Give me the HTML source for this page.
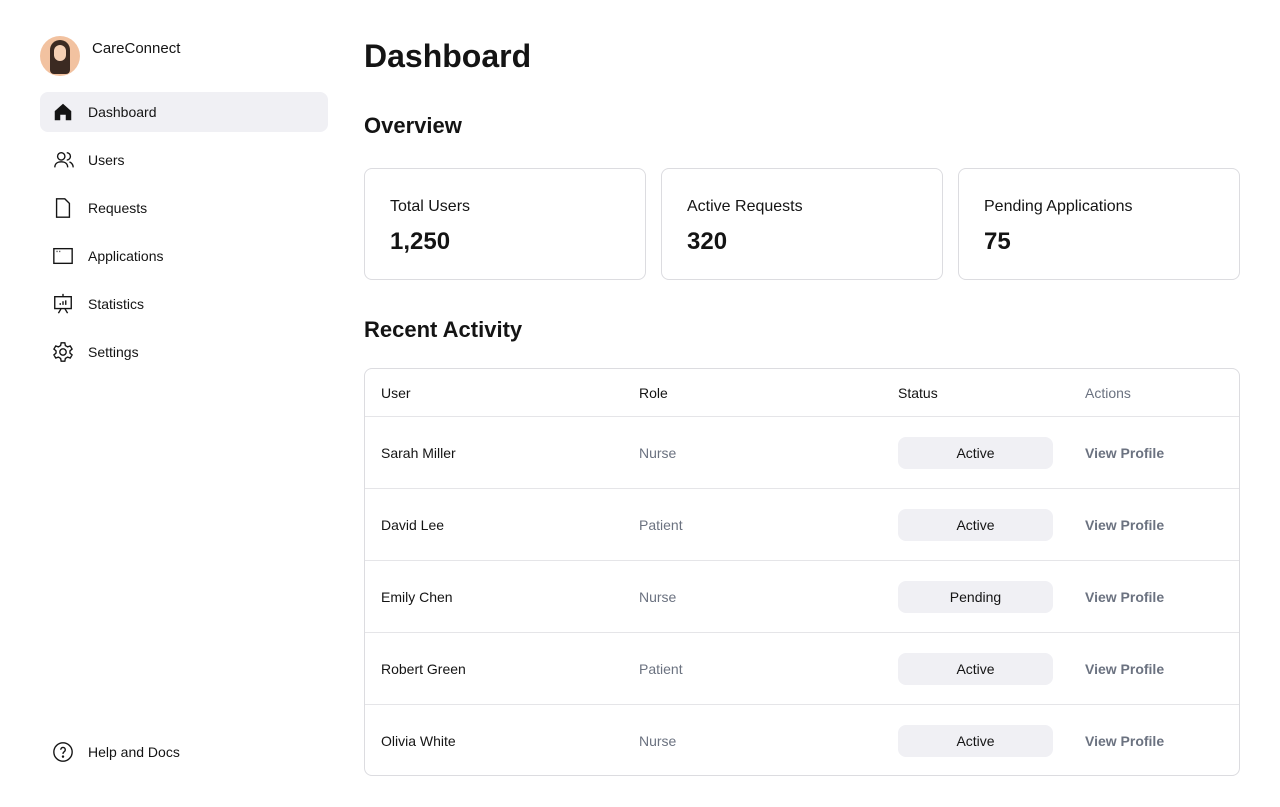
<!DOCTYPE html>
<html><head><style>
*{box-sizing:border-box;margin:0;padding:0}
body{width:1280px;height:807px;background:#fff;font-family:"Liberation Sans",sans-serif;color:#141414;position:relative;overflow:hidden}
.abs{position:absolute}
.nav{position:absolute;left:40px;width:288px;height:40px;border-radius:8px;display:flex;align-items:center;font-size:14px}
.nav svg{position:absolute;left:12px;top:9px}
.nav span{position:absolute;left:48px}
.card{position:absolute;top:168px;width:282px;height:112px;border:1px solid #dcdce0;border-radius:8px}
.card .l{position:absolute;left:25px;top:29px;font-size:16px}
.card .v{position:absolute;left:25px;top:59px;font-size:24px;font-weight:bold}
.tbl{position:absolute;left:364px;top:368px;width:876px;height:408px;border:1px solid #dcdce0;border-radius:8px}
.row{position:absolute;left:0;width:874px;font-size:14px}
.row div{position:absolute}
.bd{border-top:1px solid #e5e5e8}
.pill{background:#f0f0f4;border-radius:8px;width:155px;height:32px;text-align:center;line-height:32px}
.vp{color:#6b7280;font-weight:bold}
.gr{color:#6b7280}
</style></head><body>
<div class="abs" style="left:40px;top:36px;width:40px;height:40px;border-radius:50%;background:#f2c2a0;overflow:hidden">
<div style="position:absolute;left:10px;top:4px;width:20px;height:34px;border-radius:10px 10px 4px 4px;background:#3b2a22"></div>
<div style="position:absolute;left:14px;top:9px;width:12px;height:16px;border-radius:6px;background:#f5d0b5"></div>
</div>
<div class="abs" style="left:92px;top:40px;font-size:15px">CareConnect</div>
<div class="nav" style="top:92px;background:#f0f0f4"><svg width="22" height="22" viewBox="0 0 24 24"><path d="M3 11 12 3l9 8v10h-6v-6h-6v6H3z" fill="#141414"/></svg><span>Dashboard</span></div>
<div class="nav" style="top:140px"><svg width="24" height="22" viewBox="0 0 24 24" fill="none" stroke="#141414" stroke-width="1.5"><circle cx="9" cy="8" r="4"/><path d="M2 20c0-4 3-6 7-6s7 2 7 6"/><path d="M15 4a4 4 0 010 8M18 14c2 1 4 3 4 6"/></svg><span>Users</span></div>
<div class="nav" style="top:188px"><svg width="22" height="22" viewBox="0 0 24 24" fill="none" stroke="#141414" stroke-width="1.5"><path d="M5 2h9l5 5v15H5z"/></svg><span>Requests</span></div>
<div class="nav" style="top:236px"><svg width="22" height="22" viewBox="0 0 24 24" fill="none" stroke="#141414" stroke-width="1.5"><rect x="2" y="4" width="20" height="16"/><path d="M5 7h1M8 7h1"/></svg><span>Applications</span></div>
<div class="nav" style="top:284px"><svg width="22" height="22" viewBox="0 0 24 24" fill="none" stroke="#141414" stroke-width="1.5"><path d="M12 1v3M3 4h18v13H3zM7 22l3-5M17 22l-3-5M9 13v-2M12 13V9M15 13V8"/></svg><span>Statistics</span></div>
<div class="nav" style="top:332px"><svg width="22" height="22" viewBox="0 0 24 24" fill="none" stroke="#141414" stroke-width="1.5"><circle cx="12" cy="12" r="3.5"/><path d="M10 2h4l.6 3 2.4 1.4 2.9-1 2 3.4-2.3 2v2.4l2.3 2-2 3.4-2.9-1L14.6 19l-.6 3h-4l-.6-3L7 17.6l-2.9 1-2-3.4 2.3-2v-2.4l-2.3-2 2-3.4 2.9 1L9.4 5z"/></svg><span>Settings</span></div>
<div class="nav" style="top:732px"><svg width="22" height="22" viewBox="0 0 24 24" fill="none" stroke="#141414" stroke-width="1.5"><circle cx="12" cy="12" r="10"/><path d="M9.5 9.5a2.5 2.5 0 114 2c-1 .7-1.5 1.2-1.5 2.5"/><circle cx="12" cy="17" r=".6" fill="#141414"/></svg><span>Help and Docs</span></div>

<div class="abs" style="left:364px;top:38px;font-size:32px;font-weight:bold">Dashboard</div>
<div class="abs" style="left:364px;top:113px;font-size:22px;font-weight:bold">Overview</div>
<div class="card" style="left:364px"><div class="l">Total Users</div><div class="v">1,250</div></div>
<div class="card" style="left:661px"><div class="l">Active Requests</div><div class="v">320</div></div>
<div class="card" style="left:958px"><div class="l">Pending Applications</div><div class="v">75</div></div>
<div class="abs" style="left:364px;top:317px;font-size:22px;font-weight:bold">Recent Activity</div>
<div class="tbl">
<div class="row" style="top:0;height:47px"><div style="left:16px;top:16px">User</div><div style="left:274px;top:16px">Role</div><div style="left:533px;top:16px">Status</div><div class="gr" style="left:720px;top:16px">Actions</div></div>
<div class="row bd" style="top:47px;height:72px"><div style="left:16px;top:28px">Sarah Miller</div><div class="gr" style="left:274px;top:28px">Nurse</div><div class="pill" style="left:533px;top:20px">Active</div><div class="vp" style="left:720px;top:28px">View Profile</div></div>
<div class="row bd" style="top:119px;height:72px"><div style="left:16px;top:28px">David Lee</div><div class="gr" style="left:274px;top:28px">Patient</div><div class="pill" style="left:533px;top:20px">Active</div><div class="vp" style="left:720px;top:28px">View Profile</div></div>
<div class="row bd" style="top:191px;height:72px"><div style="left:16px;top:28px">Emily Chen</div><div class="gr" style="left:274px;top:28px">Nurse</div><div class="pill" style="left:533px;top:20px">Pending</div><div class="vp" style="left:720px;top:28px">View Profile</div></div>
<div class="row bd" style="top:263px;height:72px"><div style="left:16px;top:28px">Robert Green</div><div class="gr" style="left:274px;top:28px">Patient</div><div class="pill" style="left:533px;top:20px">Active</div><div class="vp" style="left:720px;top:28px">View Profile</div></div>
<div class="row bd" style="top:335px;height:72px"><div style="left:16px;top:28px">Olivia White</div><div class="gr" style="left:274px;top:28px">Nurse</div><div class="pill" style="left:533px;top:20px">Active</div><div class="vp" style="left:720px;top:28px">View Profile</div></div>
</div>
</body></html>
